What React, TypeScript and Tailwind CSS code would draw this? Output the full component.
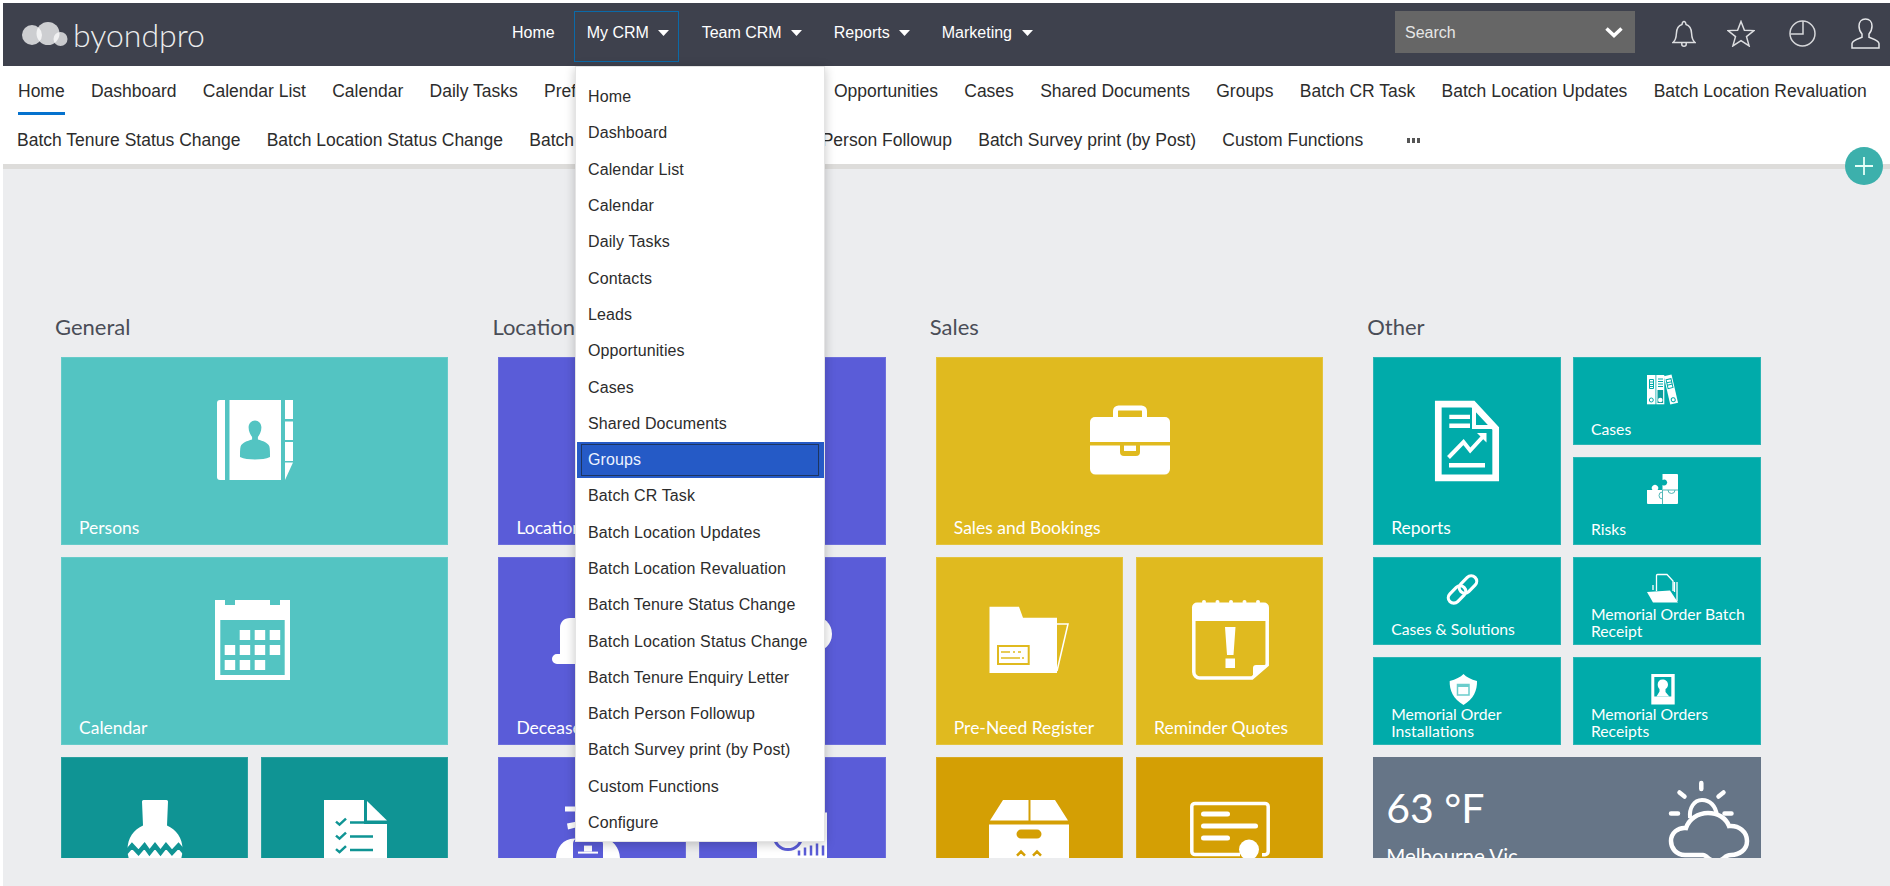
import React from "react";

const W = "#fff";

const Caret = () => (
  <svg width="11" height="6" viewBox="0 0 11 6" className="block shrink-0"><path d="M0 0h11L5.500 6z" fill="#fff" /></svg>
);

const Bell = () => (
  <svg width="24" height="27" viewBox="0 0 24 27" fill="none" stroke="#dcdde0" strokeWidth="1.5" className="block shrink-0">
    <path d="M1 22.5c2.5-2 3.2-5 3.4-9 .2-4.500 1.500-8 5.600-9 .2-1.500.8-3 2-3s1.800 1.500 2 3c4.100 1 5.400 4.500 5.600 9 .2 4 .9 7 3.400 9z" />
    <path d="M9.800 23v1.500c0 1 1 1.700 2.200 1.700s2.200-.7 2.200-1.700V23" />
  </svg>
);
const Star = () => (
  <svg width="28" height="27" viewBox="0 0 28 27" fill="none" stroke="#dcdde0" strokeWidth="1.5" className="block shrink-0">
    <path d="M14 1.500l3.400 8.700 9.600.4-7.500 6 2.600 9.300L14 20.600l-8.100 5.300 2.600-9.300-7.500-6 9.600-.4z" />
  </svg>
);
const Clock = () => (
  <svg width="27" height="27" viewBox="0 0 27 27" fill="none" stroke="#d6d7da" strokeWidth="1.5" className="block shrink-0">
    <circle cx="13.500" cy="13.500" r="12.500" />
    <path d="M14 1v13H1.500" />
  </svg>
);
const User = () => (
  <svg width="29" height="31" viewBox="0 0 29 31" fill="none" stroke="#e4e5e8" strokeWidth="1.500" className="block shrink-0">
    <path d="M14.500 1c-4 0-6.500 3-6.500 7 0 3.500 1.200 6 3 8v3.300c-3.500 1.300-9.500 2.700-10 6.200V30h27v-4.500c-.5-3.500-6.500-4.900-10-6.200V16c1.800-2 3-4.500 3-8 0-4-2.500-7-6.500-7z" />
  </svg>
);

const PersonsIcon = () => (
  <svg width="80" height="80" viewBox="0 1 80 80" className="block overflow-visible">
    <path fill={W} d="M5 1h5v80H5a3 3 0 0 1-3-3V4a3 3 0 0 1 3-3z" />
    <path fill={W} fillRule="evenodd" d="M14.500 1H66v80H14.500zM40 21.500c-3.600 0-6.400 3-6.400 7 0 4 2 7.500 3.500 9.500v2.500c-5 1.500-10 3-11.500 7-.6 2-.6 7-.6 10.500 4 1.800 9 2.500 15 2.500s11-.7 15-2.500c0-3.500 0-8.500-.6-10.500-1.500-4-6.500-5.500-11.500-7V38c1.500-2 3.500-5.500 3.500-9.500 0-4-2.800-7-6.400-7z" />
    <path fill={W} d="M70 1h8v19h-8zM70 22.500h8V41h-8zM70 43h8v19h-8zM70 63.500h8L70 81z" />
  </svg>
);

const CalendarIcon = () => {
  const cells = [[1,0],[2,0],[3,0],[0,1],[1,1],[2,1],[3,1],[0,2],[1,2],[2,2]];
  return (
    <svg width="80" height="80" viewBox="0 2 80 80" className="block overflow-visible">
      <path fill={W} fillRule="evenodd" d="M0 2h10v5h10V2h35v5h10V2h10v80H0zM5.300 22v55H69.700V22z" />
      {cells.map(([c, r]) => (
        <rect key={`${c}-${r}`} x={9.7 + c * 15} y={32 + r * 15} width="10.500" height="10" fill={W} />
      ))}
    </svg>
  );
};

const VaseIcon = () => (
  <svg width="80" height="80" viewBox="0 2.400 80 80" className="block overflow-visible">
    <path fill={W} d="M27 4q0-1.600 1.500-1.600h23q1.500 0 1.500 1.600l-1 24c9 4 15.500 12 15.500 24 0 12-6 20-15.500 24H28c-9.500-4-15.500-12-15.500-24 0-12 6.500-20 15.500-24z" />
    <path fill="none" stroke="#0f9494" strokeWidth="4.500" d="M11 55l6-7 6.500 7 6-7 5 7 5.500-7 5.500 7 5.500-7 6 7 6.500-7 6 7" />
  </svg>
);

const ChecklistIcon = () => (
  <svg width="80" height="80" viewBox="0 2.400 80 80" className="block overflow-visible">
    <path fill={W} d="M9 2.400h40v24h23V80H9z" />
    <path fill={W} d="M52 3.500L72 23H52z" />
    <path fill="none" stroke="#0f9494" strokeWidth="2.500" d="M21 24l3.500 3 6.500-6M21 38l3.500 3 6.500-6M21 51.500l3.500 3 6.500-6M35 25h23M35 39h23M35 52.500h23" />
  </svg>
);

const DeceasedIcon = () => (
  <svg width="80" height="80" viewBox="0 2 80 80" className="block overflow-visible">
    <path fill={W} d="M8 56V30c0-6 4-10 10-10h22v46H5a5 5 0 0 1 0-10z" />
    <circle cx="62" cy="36" r="18" fill={W} />
  </svg>
);

const SafeIcon = () => (
  <svg width="80" height="80" viewBox="0 2.400 80 80" className="block overflow-visible">
    <path fill={W} d="M13 9h22v5H13zM15 26l20-4v5l-19 5z" />
    <path fill={W} fillRule="evenodd" d="M4 61c0-10 7-20 18-20h28c11 0 18 10 18 20v10H4zM26 41c-3 0-5 2-5 6v24h30V47c0-4-2-6-5-6z" />
    <path fill="none" stroke={W} strokeWidth="2" d="M26 55h20" />
    <rect x="32" y="48" width="8" height="6" fill={W} />
  </svg>
);

const ChartIcon = () => (
  <svg width="80" height="80" viewBox="0 2.400 80 80" className="block overflow-visible">
    <path fill={W} d="M5 15h70v65H5z" />
    <path fill="none" stroke="#5a5cd8" strokeWidth="3" d="M22 38a14 14 0 1 0 28 0" />
    <path fill="none" stroke="#5a5cd8" strokeWidth="2.500" d="M47 58v-5M53 58v-8M59 58v-10M65 58v-12M71 58v-10" />
  </svg>
);

const BriefcaseIcon = () => (
  <svg width="80" height="80" viewBox="0 1 80 80" className="block overflow-visible">
    <path fill="none" stroke={W} strokeWidth="5" d="M25.500 18v-6a3 3 0 0 1 3-3h23a3 3 0 0 1 3 3v6" />
    <path fill={W} d="M5 18h70a5 5 0 0 1 5 5v20H0V23a5 5 0 0 1 5-5z" />
    <path fill={W} fillRule="evenodd" d="M0 46.600h30V53a4 4 0 0 0 4 4h12a4 4 0 0 0 4-4v-6.400h30V70a5.500 5.500 0 0 1-5.500 5.500h-69A5.500 5.500 0 0 1 0 70z" />
    <path fill={W} d="M34 46.600h12V52H34z" />
  </svg>
);

const FolderIcon = () => (
  <svg width="80" height="80" viewBox="0 2 80 80" className="block overflow-visible">
    <path fill={W} fillRule="evenodd" d="M.5 8.700H30L34 19.800H68V75H.5zM8 47v20h32.700V47z" />
    <rect x="10" y="49" width="28.700" height="16" fill={W} />
    <path fill="none" stroke="#e0ba1f" strokeWidth="1.500" d="M12 54h9M24 54h2M29 54h3M12 60h19M33 60h2" />
    <path fill="none" stroke={W} strokeWidth="1.500" d="M68 26h11L68 73" />
  </svg>
);

const ReminderIcon = () => (
  <svg width="80" height="80" viewBox="0 2 80 80" className="block overflow-visible">
    <path fill={W} d="M7 4.500h67a5 5 0 0 1 5 5V23H2V9.500a5 5 0 0 1 5-5z" />
    <circle cx="14" cy="4" r="2" fill={W} /><circle cx="27.500" cy="4" r="2" fill={W} /><circle cx="41" cy="4" r="2" fill={W} /><circle cx="54.500" cy="4" r="2" fill={W} /><circle cx="68" cy="4" r="2" fill={W} />
    <path fill="none" stroke={W} strokeWidth="3.500" d="M3.800 20v54a6 6 0 0 0 6 6H62l15.200-13V20" />
    <path fill={W} d="M63 80V70q0-3 3-3h11z" />
    <path fill={W} d="M35 29h10.500l-2 28h-6.500zM35.500 60.500h9.500v9.500h-9.500z" />
  </svg>
);

const BoxIcon = () => (
  <svg width="80" height="80" viewBox="0 2.400 80 80" className="block overflow-visible">
    <path fill={W} d="M1 23L14 2.500h25.500V23zM41.500 2.500H66L79 23H41.500z" />
    <path fill={W} fillRule="evenodd" d="M0 27h80v53H0zM32 32a4.500 4.500 0 0 0 0 9h16a4.500 4.500 0 0 0 0-9z" />
    <path fill="none" stroke="#d49f04" strokeWidth="2.500" d="M28 58l4-4 4 4M44 58l4-4 4 4" />
  </svg>
);

const CertificateIcon = () => (
  <svg width="80" height="80" viewBox="0 2.400 80 80" className="block overflow-visible">
    <path fill="none" stroke={W} strokeWidth="3.500" d="M50 57H5a3.200 3.200 0 0 1-3.200-3.200V9A3.200 3.200 0 0 1 5 5.800h70A3.200 3.200 0 0 1 78.200 9v45a3.200 3.200 0 0 1-3.200 3.200h-3" />
    <rect x="11" y="14" width="29" height="5" rx="2.500" fill={W} />
    <rect x="11" y="26" width="57" height="5" rx="2.500" fill={W} />
    <rect x="11" y="38" width="29" height="5" rx="2.500" fill={W} />
    <circle cx="59" cy="52" r="10" fill={W} />
  </svg>
);

const ReportsIcon = () => (
  <svg width="80" height="80" viewBox="0 0.500 80 80" className="block overflow-visible">
    <path fill="none" stroke={W} strokeWidth="6.700" d="M11.300 4.600H46L68.700 29v49.400H11.300z" />
    <path fill="none" stroke={W} strokeWidth="4" d="M47 4v23.500h22" />
    <path fill={W} d="M22.300 15.300H43v4.300H22.300zM22.300 24H43v4.500H22.300zM22 63.600h36V68H22z" />
    <path fill="none" stroke={W} strokeWidth="4" d="M21.500 58l15-15.500 6.700 8.500L57 36" />
    <path fill={W} d="M50 33.500h9.500V43z" />
  </svg>
);

const BindersIcon = () => (
  <svg width="31" height="31" viewBox="0 0 31 31" className="block overflow-visible">
    <rect x="0" y="1" width="8.500" height="29.300" fill={W} />
    <path fill="none" stroke="#00abaa" strokeWidth="1" d="M2.500 5.500h4v9h-4zM2.500 8h4M2.500 10.500h4M2.500 12.500h4" />
    <circle cx="4.300" cy="26" r="2" fill="none" stroke="#00abaa" />
    <rect x="9.300" y="1" width="8" height="29.300" fill={W} />
    <rect x="10.500" y="16" width="5.600" height="13" fill="#0f9c9b" />
    <path fill="none" stroke="#00abaa" strokeWidth="1" d="M11 5h5M11 7.500h5M11 10h5M11 12.500h5" />
    <circle cx="13.300" cy="26" r="2.300" fill={W} />
    <g transform="rotate(-13 24 16)">
      <rect x="20" y="1" width="8" height="29" fill={W} />
      <path fill="none" stroke="#00abaa" strokeWidth="1" d="M21.500 5h5v9h-5zM21.500 8h5M21.500 10.500h5" />
      <circle cx="24" cy="26" r="2" fill="none" stroke="#00abaa" />
    </g>
  </svg>
);

const PuzzleIcon = () => (
  <svg width="31" height="31" viewBox="0 0 31 31" className="block overflow-visible">
    <path fill={W} d="M15.500 0H30a1 1 0 0 1 1 1v28a1 1 0 0 1-1 1H1a1 1 0 0 1-1-1V16h5.500a3.200 3.200 0 1 1 5 0h5V11a3 3 0 1 0 0-5z" />
    <path fill="none" stroke="#53b8b8" strokeWidth="1" d="M15.500 16H31M15.500 16v14M21 16a3.500 3.500 0 0 0 7 0M15.500 18a3.500 3.500 0 0 0 0 7" />
  </svg>
);

const LinkIcon = () => (
  <svg width="31" height="31" viewBox="0 0 31 31" fill="none" stroke="#fff" strokeWidth="3.200" className="block overflow-visible">
    <rect x="0" y="15" width="20" height="11" rx="5.500" transform="rotate(-45 10 20.500)" />
    <rect x="11" y="5" width="20" height="11" rx="5.500" transform="rotate(-45 21 10.500)" />
  </svg>
);

const BatchIcon = () => (
  <svg width="31" height="31" viewBox="0 0 31 31" className="block overflow-visible">
    <path fill="none" stroke={W} strokeWidth="1.300" d="M9.500 17V1.500c0-.6.400-1 1-1h9.500L26 7v10M6 16V11M30 27V8M27.500 8v10" />
    <path fill={W} d="M0 18l23-1.500 8 12H6z" />
  </svg>
);

const PortraitIcon = () => (
  <svg width="31" height="31" viewBox="0 0 31 31" className="block overflow-visible">
    <path fill={W} fillRule="evenodd" d="M4.300 0H27.700V30.600H4.300zM7.300 3V22.500H24.300V3z" />
    <path fill={W} d="M15.500 5.500c-3 0-4.800 2-4.800 5 0 2 .8 3.500 1.800 4.500v2.500L9.500 22.500h12.800L18.500 18v-3c1.500-1 2.500-2.500 2.500-4.500 0-3-2.500-5-5.500-5z" />
  </svg>
);

const ShieldIcon = () => (
  <svg width="31" height="31" viewBox="0 0 31 31" className="block overflow-visible">
    <path fill={W} d="M16.500 0c2.800 3 7.500 5.500 13.500 7 .3 9-3.300 18-13.500 24C6.300 25 2.300 16 2.700 7c6-1.500 11-4 13.800-7z" />
    <path fill="none" stroke="#6ccdcc" strokeWidth="1.500" d="M10.500 10.500h11.500v10.500H10.500z" />
    <path fill="#6ccdcc" d="M10.500 10.500h11.500v2.500H10.500z" />
  </svg>
);

const WeatherIcon = () => (
  <svg width="80" height="80" viewBox="0 0 80 80" fill="none" stroke="#fff" className="block shrink-0 overflow-visible">
    <g strokeWidth="4.500" strokeLinecap="round">
      <path d="M32.300 2v6M10.500 11.500l5 4M54.500 11.500l-5 4M2 32.500h7M55.500 32.500h7" />
    </g>
    <path strokeWidth="4" d="M21 37c-1-10 4-18 12-18s14 6 15 16" />
    <path strokeWidth="4.500" fill="#667587" d="M16 74C7 74 2 67 2 60c0-8 7-14 15-13 3-9 12-15 22-15 10 0 18 5 21 13 10-1 18 6 18 15s-8 14-16 14c-3 0-5 1-7 3-5 4-11 4-16 0-2-2-3-3-5-3z" />
  </svg>
);

const Label = ({ text, small, two }: { text: string; small?: boolean; two?: boolean }) => (
  <div className={small ? (two ? "mt-auto pl-[17px] pb-[8px] text-[15.750px] leading-[17px] text-white whitespace-pre-line" : "mt-auto pl-[17px] pb-[7px] text-[15.750px] leading-[17px] text-white") : "mt-auto pl-[17px] pb-[4px] text-[17.500px] leading-[24px] text-white"}>
    {text}
  </div>
);

const Tile = ({ cls, icon, text, wide }: { cls: string; icon: React.ReactNode; text?: string; wide?: boolean }) => (
  <div className={`flex h-[188px] flex-col items-stretch border pt-[42px] ${wide ? "col-span-2" : ""} ${cls}`}>
    <div className="flex justify-center">{icon}</div>
    {text ? <Label text={text} /> : null}
  </div>
);

const Mini = ({ icon, text, two }: { icon: React.ReactNode; text: string; two?: boolean }) => (
  <div className="flex h-[88px] flex-col border border-[#2ab5b4] bg-[#00abaa] pt-[16px]">
    <div className="flex justify-center pr-[9px]">{icon}</div>
    <Label text={text} small two={two} />
  </div>
);

const Section = ({ title, narrow, children }: { title: string; narrow?: boolean; children: React.ReactNode }) => (
  <div className="w-[437.400px] shrink-0">
    <div className="h-[30px] text-[22px] leading-[30px] text-[#4a4d57]">{title}</div>
    <div className={narrow ? "ml-[6px] mt-[15px] h-[501px] w-[387px] overflow-hidden" : "ml-[6px] mt-[15px] h-[501px] w-[387.500px] overflow-hidden"}>
      {children}
    </div>
  </div>
);

const TEAL = "border-[#66cbc9] bg-[#53c4c2]";
const DTEAL = "border-[#2aa09f] bg-[#0f9494]";
const PURPLE = "border-[#6d6fdc] bg-[#5a5cd8]";
const YELLOW = "border-[#e4c43c] bg-[#e0ba1f]";
const DYELLOW = "border-[#d9ab22] bg-[#d49f04]";

const row1 = ["Home", "Dashboard", "Calendar List", "Calendar", "Daily Tasks", "Preferences", "Contacts", "Leads", "Opportunities", "Cases", "Shared Documents", "Groups", "Batch CR Task", "Batch Location Updates", "Batch Location Revaluation"];
const row2 = ["Batch Tenure Status Change", "Batch Location Status Change", "Batch Tenure Enquiry Letter", "Batch Person Followup", "Batch Survey print (by Post)", "Custom Functions"];
const menu = ["Home", "Dashboard", "Calendar List", "Calendar", "Daily Tasks", "Contacts", "Leads", "Opportunities", "Cases", "Shared Documents", "Groups", "Batch CR Task", "Batch Location Updates", "Batch Location Revaluation", "Batch Tenure Status Change", "Batch Location Status Change", "Batch Tenure Enquiry Letter", "Batch Person Followup", "Batch Survey print (by Post)", "Custom Functions", "Configure"];

export default function App() {
  return (
    <div className="relative flex h-[886px] w-full flex-col overflow-hidden bg-white pl-[3px] pt-[3px] font-['Liberation_Sans',Arial,sans-serif]">
      <header className="flex h-[63px] shrink-0 items-center bg-[#3e414d]">
        <div className="flex h-full w-[496px] shrink-0 items-center pl-[19px]">
          <svg width="50" height="30" viewBox="0 0 50 30" className="block shrink-0">
            <circle cx="10" cy="15" r="10" fill="#fff" fillOpacity="0.74" />
            <circle cx="26" cy="13.500" r="11.500" fill="#fff" fillOpacity="0.74" />
            <circle cx="38.500" cy="19" r="7" fill="#fff" fillOpacity="0.72" />
          </svg>
          <span className="ml-[1px] font-['Lato',sans-serif] text-[32px] font-light leading-[40px] text-[#eceded]">byondpro</span>
        </div>
        <nav className="mt-[4px] flex h-[51px] items-center text-[16px] text-white">
          <a className="flex h-full items-center px-[13px] pb-[7px]">Home</a>
          <a className="ml-[6px] flex h-full w-[105px] items-center gap-[9px] border border-[#0b6aa8] pb-[7px] pl-[12px]">My CRM <Caret /></a>
          <a className="ml-[10px] flex h-full items-center gap-[9px] px-[13px] pb-[7px]">Team CRM <Caret /></a>
          <a className="ml-[6px] flex h-full items-center gap-[9px] px-[13px] pb-[7px]">Reports <Caret /></a>
          <a className="ml-[6px] flex h-full items-center gap-[10px] px-[13px] pb-[7px]">Marketing <Caret /></a>
        </nav>
        <div className="ml-auto mb-[5px] flex h-[42px] w-[240px] shrink-0 items-center bg-[#666666] pl-[10px] pr-[12px] text-[16px] text-[#e6e6e6]">
          <span className="pt-[2px]">Search</span>
          <svg width="18" height="11" viewBox="0 0 18 11" fill="none" stroke="#fff" strokeWidth="3.500" className="ml-auto block"><path d="M1.500 1.500L9 8.500l7.500-7" /></svg>
        </div>
        <div className="flex w-[255px] shrink-0 items-center pb-[3px] pl-[37px]">
          <Bell />
          <div className="ml-[31px]"><Star /></div>
          <div className="ml-[34px]"><Clock /></div>
          <div className="ml-[35px]"><User /></div>
        </div>
      </header>

      <div className="shrink-0 bg-white text-[17.500px] text-[#2c2c2c]">
        <div className="flex h-[49px] items-stretch gap-[26.270px] whitespace-nowrap pl-[15px]">
          {row1.map((t, i) => (
            <a key={t} className={i === 0 ? "flex items-center border-b-[3px] border-[#0572ce] pt-[5px]" : "flex items-center pt-[2px]"}>{t}</a>
          ))}
        </div>
        <div className="flex h-[49px] items-center gap-[26.200px] whitespace-nowrap pl-[14px] pt-[2px]">
          {row2.map((t) => (<a key={t}>{t}</a>))}
          <span className="ml-[17px] flex gap-[1.500px]">
            <i className="h-[5px] w-[3.500px] bg-[#555]" /><i className="h-[5px] w-[3.500px] bg-[#555]" /><i className="h-[5px] w-[3.500px] bg-[#555]" />
          </span>
        </div>
      </div>
      <div className="h-[5px] shrink-0 bg-[#dddcda]" />

      <main className="flex flex-1 bg-[#ecedef] pl-[52px] pt-[143px] font-['Lato',sans-serif]">
        <Section title="General" narrow>
          <div className="grid grid-cols-2 gap-x-[13px] gap-y-[12px]">
            <Tile cls={TEAL} wide icon={<PersonsIcon />} text="Persons" />
            <Tile cls={TEAL} wide icon={<CalendarIcon />} text="Calendar" />
            <Tile cls={DTEAL} icon={<VaseIcon />} />
            <Tile cls={DTEAL} icon={<ChecklistIcon />} />
          </div>
        </Section>
        <Section title="Locations">
          <div className="grid grid-cols-2 gap-x-[13px] gap-y-[12px]">
            <Tile cls={PURPLE} wide icon={<span />} text="Locations" />
            <Tile cls={PURPLE} icon={<DeceasedIcon />} text="Deceased" />
            <Tile cls={PURPLE} icon={<DeceasedIcon />} />
            <Tile cls={PURPLE} icon={<SafeIcon />} />
            <Tile cls={PURPLE} icon={<ChartIcon />} />
          </div>
        </Section>
        <Section title="Sales">
          <div className="grid grid-cols-2 gap-x-[13px] gap-y-[12px]">
            <Tile cls={YELLOW} wide icon={<BriefcaseIcon />} text="Sales and Bookings" />
            <Tile cls={YELLOW} icon={<FolderIcon />} text="Pre-Need Register" />
            <Tile cls={YELLOW} icon={<ReminderIcon />} text="Reminder Quotes" />
            <Tile cls={DYELLOW} icon={<BoxIcon />} />
            <Tile cls={DYELLOW} icon={<CertificateIcon />} />
          </div>
        </Section>
        <Section title="Other">
          <div className="grid grid-cols-2 gap-x-[12px] gap-y-[12px]">
            <div className="row-span-2 flex flex-col border border-[#2ab5b4] bg-[#00abaa] pt-[42px]">
              <div className="flex justify-center"><ReportsIcon /></div>
              <Label text="Reports" />
            </div>
            <Mini icon={<BindersIcon />} text="Cases" />
            <Mini icon={<PuzzleIcon />} text="Risks" />
            <Mini icon={<LinkIcon />} text="Cases & Solutions" />
            <Mini icon={<BatchIcon />} two text={"Memorial Order Batch\nReceipt"} />
            <Mini icon={<ShieldIcon />} two text={"Memorial Order\nInstallations"} />
            <Mini icon={<PortraitIcon />} two text={"Memorial Orders\nReceipts"} />
            <div className="col-span-2 flex h-[188px] items-start justify-between bg-[#667587] pl-[13px] pr-[12px] pt-[24px] text-white">
              <div className="pt-[2px]">
                <div className="text-[41px] font-normal leading-[50px]">63 °F</div>
                <div className="mt-[10px] text-[20.500px] font-normal leading-[26px]">Melbourne Vic</div>
              </div>
              <WeatherIcon />
            </div>
          </div>
        </Section>
      </main>

      <div className="absolute left-[575px] top-[66px] h-[776px] w-[250px] border border-[#e4e4e4] bg-white pt-[12px] text-[16px] tracking-[0.12px] text-[#2c2c2c] shadow-[0_2px_10px_rgba(0,0,0,0.22)]">
        {menu.map((t) =>
          t === "Groups" ? (
            <div key={t} className="ml-[1px] flex h-[36.300px] items-center bg-[#255ac6] py-[2px] pl-[4px] pr-[5px] text-[#edf3ff]">
              <div className="flex h-full w-full items-center border border-[#1d3560] pl-[6px]">{t}</div>
            </div>
          ) : (
            <div key={t} className="flex h-[36.300px] items-center pl-[12px]">{t}</div>
          )
        )}
      </div>

      <div className="absolute left-[1844.500px] top-[146.500px] flex h-[38px] w-[38px] items-center justify-center rounded-full bg-[#3cb0ac]">
        <svg width="18" height="18" viewBox="0 0 18 18" stroke="#e6fff8" strokeWidth="1.800" className="block"><path d="M9 0v18M0 9h18" /></svg>
      </div>
    </div>
  );
}
